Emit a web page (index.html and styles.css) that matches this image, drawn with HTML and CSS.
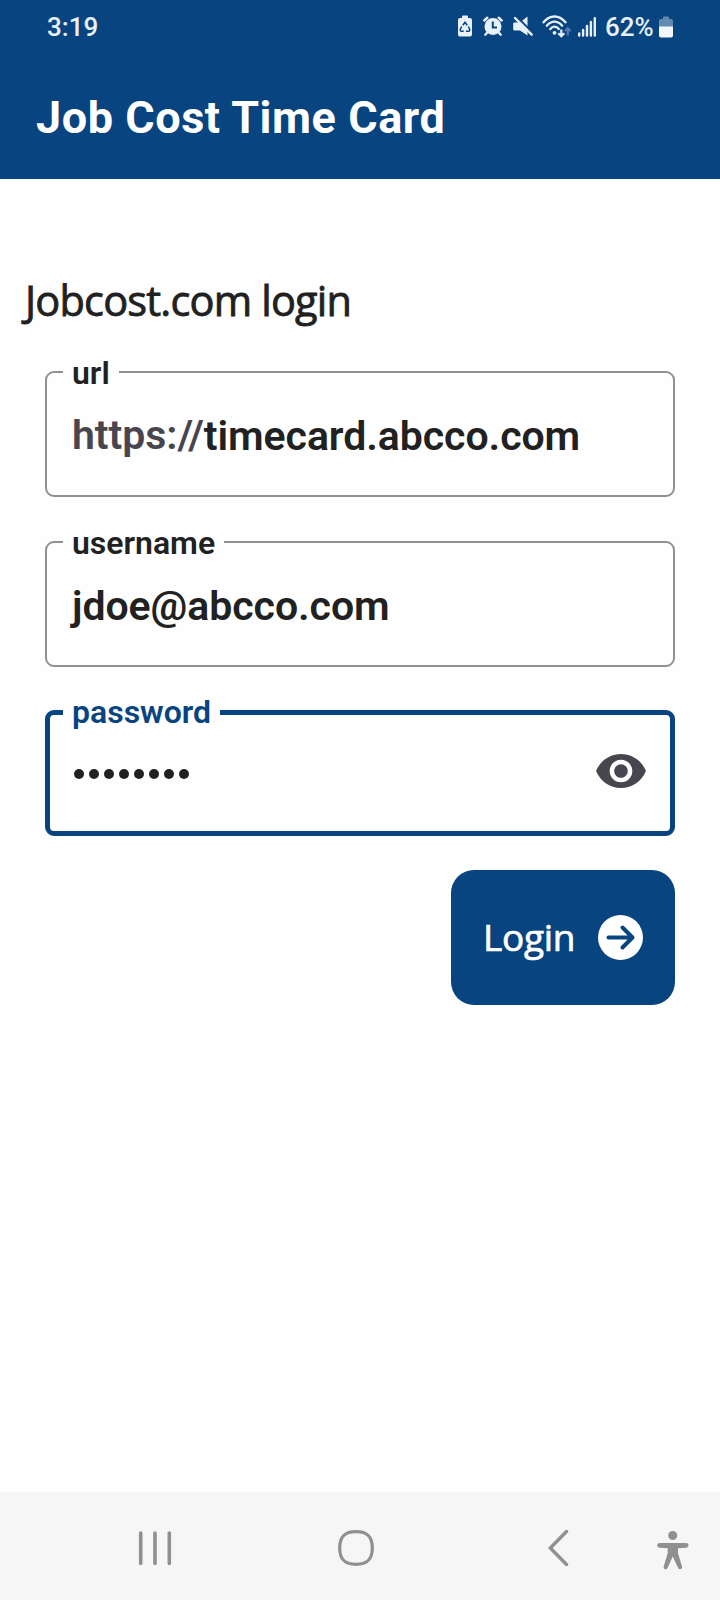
FILE: index.html
```html
<!DOCTYPE html>
<html lang="en">
    <head>
        <meta charset="utf-8">
        <title>Job Cost Time Card</title>
        <link rel="stylesheet" href="styles.css">
    </head>
    <body>
        <header class="header">
            <div class="status-bar">
                <span class="clock">3:19</span>
                <div class="status-icons">
                    <svg class="icon-saver" width="14" height="22" viewBox="0 0 14 22">
                        <path fill="#e8f0fa" d="M4 3V1.500Q4 .5 5 .5h4q1 0 1 1V3h2q2 0 2 2v14.500q0 2-2 2H2q-2 0-2-2V5q0-2 2-2z"/>
                        <path fill="none" stroke="#084480" stroke-width="1.500" d="M4.800 10.300l2.200-3 2.200 3M10.300 11.500l1.300 2.500q.6 2-1.300 2.200H8M5.700 16.200H3.700Q1.800 16 2.400 14l1.300-2.500"/>
                    </svg>
                    <svg class="icon-alarm" width="20" height="20" viewBox="0 0 20 20">
                        <circle cx="10" cy="10.500" r="8.500" fill="#e8f0fa"/>
                        <path fill="none" stroke="#e8f0fa" stroke-width="2.400" stroke-linecap="round" d="M1.300 4.500l3-2.800M18.700 4.500l-3-2.800M4.300 16.500l-2 2.200M15.700 16.500l2 2.200"/>
                        <path fill="none" stroke="#084480" stroke-width="2" d="M9.800 5.500v6h4.200"/>
                    </svg>
                    <svg class="icon-mute" width="21" height="21" viewBox="0 0 21 21">
                        <path fill="#e8f0fa" d="M1.500 6.500H7L14.500.5v19L7 14.500H1.500q-1.300 0-1.300-1.300V7.800q0-1.300 1.300-1.300z"/>
                        <path stroke="#084480" stroke-width="2" d="M3.300 .3l18 18"/>
                        <path stroke="#e8f0fa" stroke-width="2.400" stroke-linecap="round" d="M2 2l16.700 16.700"/>
                    </svg>
                    <svg class="icon-wifi" width="30" height="23" viewBox="0 0 30 23">
                        <g fill="none" stroke="#e8f0fa" stroke-width="2.300" stroke-linecap="round">
                            <path d="M1.500 7.300Q6.500 1.500 12.500 1.500T23.500 7.300"/>
                            <path d="M4.800 10.700Q8.200 6.600 12.500 6.600T20.200 10.700"/>
                            <path d="M8.200 14.100Q10 11.700 12.500 11.700T16.800 14"/>
                        </g>
                        <circle cx="12.500" cy="17.800" r="1.900" fill="#e8f0fa"/>
                        <path fill="none" stroke="#e8f0fa" stroke-width="2.200" d="M19.300 14.500v6.500M16.300 18.300l3 2.900 3-2.900"/>
                        <path fill="none" stroke="#537ba6" stroke-width="2.200" d="M25.800 20.500v-7M22.900 16l2.900-2.800 2.900 2.800"/>
                    </svg>
                    <svg class="icon-signal" width="18" height="20" viewBox="0 0 18 20">
                        <path stroke="#e8f0fa" stroke-width="2.400" stroke-linecap="round" d="M1.200 16.500v2M5.100 13v5.500M9 9v9.500M12.900 5v13.500M16.800 1.200v17.300"/>
                    </svg>
                    <span class="percent">62%</span>
                    <svg class="icon-battery" width="14" height="22" viewBox="0 0 14 22">
                        <path fill="#6489b0" d="M4 3V1.500Q4 .5 5 .5h4q1 0 1 1V3h2q2 0 2 2v6H0V5q0-2 2-2z"/>
                        <path fill="#f2f6fb" d="M0 10.500h14v9q0 2-2 2H2q-2 0-2-2z"/>
                    </svg>
                </div>
            </div>
            <h1 class="title">Job Cost Time Card</h1>
        </header>

        <main class="content">
            <h2 class="subtitle">Jobcost.com login</h2>

            <form class="login-form">
                <fieldset class="field">
                    <legend>url</legend>
                    <div class="value"><span class="prefix">https://</span><span>timecard.abcco.com</span></div>
                </fieldset>

                <fieldset class="field">
                    <legend>username</legend>
                    <div class="value"><span>jdoe@abcco.com</span></div>
                </fieldset>

                <fieldset class="field focused">
                    <legend>password</legend>
                    <div class="value">
                        <div class="dots">
                            <i></i><i></i><i></i><i></i><i></i><i></i><i></i><i></i>
                        </div>
                        <svg class="eye" width="50" height="34" viewBox="1 4.500 22 15">
                            <path fill="#49454f" d="M12 4.500C7 4.500 2.730 7.610 1 12c1.730 4.390 6 7.500 11 7.500s9.270-3.110 11-7.500c-1.730-4.390-6-7.500-11-7.500zM12 17c-2.760 0-5-2.240-5-5s2.240-5 5-5 5 2.240 5 5-2.240 5-5 5zm0-8c-1.660 0-3 1.340-3 3s1.340 3 3 3 3-1.340 3-3-1.340-3-3-3z"/>
                        </svg>
                    </div>
                </fieldset>

                <button class="login-button" type="button">
                    <span>Login</span>
                    <svg width="45" height="45" viewBox="0 0 45 45">
                        <circle cx="22.500" cy="22.500" r="22.500" fill="#fff"/>
                        <path fill="none" stroke="#084480" stroke-width="4" stroke-linecap="round" stroke-linejoin="round" d="M10.500 22.500H34M24.500 12.500l10 10-10 10"/>
                    </svg>
                </button>
            </form>
        </main>

        <nav class="nav-bar">
            <svg class="nav-recent" width="34" height="36" viewBox="0 0 34 36">
                <path stroke="#909090" stroke-width="3.600" stroke-linecap="round" d="M2.700 3v30.500M17 3v30.500M31.300 3v30.500"/>
            </svg>
            <svg class="nav-home" width="36" height="36" viewBox="0 0 36 36">
                <path fill="none" stroke="#909090" stroke-width="3.200" d="M18 1.700C29.500 1.700 34.300 6.500 34.300 18S29.500 34.300 18 34.300 1.700 29.500 1.700 18 6.500 1.700 18 1.700z"/>
            </svg>
            <svg class="nav-back" width="21" height="38" viewBox="0 0 21 38">
                <path fill="none" stroke="#909090" stroke-width="3.400" stroke-linecap="round" d="M18.500 2.500L2.300 19l16.200 16.500"/>
            </svg>
            <svg class="nav-access" width="32" height="40" viewBox="0 0 32 40">
                <circle cx="15.700" cy="5.500" r="4.500" fill="#909090"/>
                <path fill="#909090" d="M2.500 13h26.700a2.300 2.300 0 0 1 0 4.700l-8.200.6v5l4 13.200a2 2 0 0 1-3.800 1.500L15.700 26.500 10.500 38a2 2 0 0 1-3.800-1.500l4-13.200v-5l-8.200-.6a2.300 2.300 0 0 1 0-4.700z"/>
            </svg>
        </nav>
    </body>
</html>
```
FILE: styles.css
```css
body {
    margin: 0;
    height: 1600px;
    display: flex;
    flex-direction: column;
    background-color: #fefefe;
    color: #212121;
    font-family: Roboto, sans-serif;
}

.header {
    height: 179px;
    background-color: #084480;
    color: white;
}
.status-bar {
    display: flex;
    justify-content: space-between;
    height: 54px;
    padding: 0 47px;
    color: #e8f0fa;
    font-size: 26px;
    font-weight: 500;
    line-height: 54px;
}
.status-icons {
    display: flex;
    align-items: center;
}
.icon-saver {
    margin-bottom: 2px;
}
.icon-alarm {
    margin-left: 11px;
    margin-bottom: 2px;
}
.icon-mute {
    margin-left: 10px;
    margin-bottom: 2px;
}
.icon-wifi {
    margin-left: 8px;
    margin-bottom: 1px;
}
.icon-signal {
    margin-left: 6px;
    margin-bottom: 1px;
}
.percent {
    width: 48px;
    margin-left: 9px;
    margin-right: 6px;
}
.icon-battery {
    margin-bottom: 1px;
}
.title {
    margin: 0;
    padding: 37px 36px 0;
    font-size: 45px;
    font-weight: 700;
    letter-spacing: 0.55px;
    line-height: 54px;
}

.content {
    flex: 1;
}
/* thin stroke stands in for a medium weight */
.subtitle {
    margin: 0;
    padding: 91px 0 1px 25px;
    font-family: "Open Sans", sans-serif;
    font-size: 41.5px;
    font-weight: 500;
    letter-spacing: -0.8px;
    line-height: 60px;
    -webkit-text-stroke: 0.8px #212121;
}
.login-form {
    display: flex;
    flex-direction: column;
    padding: 24px 45px 0;
}

/* the legend cuts the gap in the border */
.field {
    box-sizing: border-box;
    height: 142px;
    margin: 0 0 28px;
    padding: 0 24px 0 16px;
    border: 2px solid #909090;
    border-radius: 9px;
    min-width: 0;
}
.field legend {
    box-sizing: border-box;
    height: 34px;
    padding: 0 9px;
    font-size: 32px;
    font-weight: 600;
    line-height: 37px;
    white-space: nowrap;
}
.value {
    display: flex;
    align-items: center;
    height: 80px;
    padding: 7px 0 0 9px;
    font-size: 41px;
    font-weight: 600;
    letter-spacing: -0.06px;
    white-space: nowrap;
}
.prefix {
    margin-bottom: 2px;
    color: #49454f;
}
.focused {
    margin-top: -1px;
    padding: 0 24px 0 13px;
    border: 5px solid #084480;
    color: #084480;
}
.focused legend {
    height: 36px;
}
.focused .value {
    padding-top: 1px;
    padding-left: 11px;
}
.dots {
    display: flex;
    flex: 1;
    gap: 5px;
    padding-top: 6px;
}
.dots i {
    width: 10px;
    height: 10px;
    border-radius: 50%;
    background-color: #212121;
}

.login-button {
    display: flex;
    align-items: center;
    justify-content: space-between;
    align-self: flex-end;
    width: 224px;
    height: 135px;
    margin-top: 6px;
    padding: 0 32px 0 32px;
    border: none;
    border-radius: 23px;
    background-color: #084480;
    color: white;
    font-family: "Open Sans", sans-serif;
    font-size: 37px;
    font-weight: 500;
    letter-spacing: -0.3px;
    -webkit-text-stroke: 0.7px white;
}
.login-button span {
    margin-bottom: 2px;
}

.nav-bar {
    display: flex;
    align-items: center;
    height: 104px;
    padding-top: 4px;
    background-color: #f6f6f6;
}
.nav-recent {
    margin-left: 138px;
}
.nav-home {
    margin-left: 166px;
}
.nav-back {
    margin-left: 174px;
}
.nav-access {
    margin-left: 88px;
    margin-top: 4px;
}
```
